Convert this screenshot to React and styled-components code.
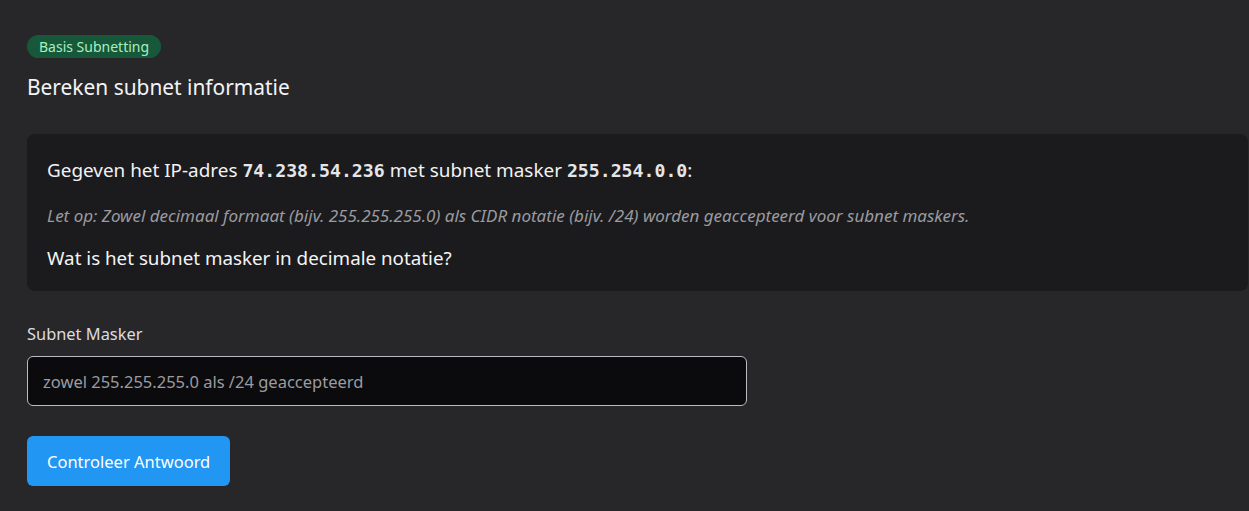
import React from "react";
import styled, { createGlobalStyle } from "styled-components";

const Global = createGlobalStyle`
  html, body {
    margin: 0;
    padding: 0;
    background: #27272a;
    color: #f1f1f3;
    font-family: "Noto Sans", "Open Sans", sans-serif;
    overflow: hidden;
  }
`;

const Page = styled.div`
  padding: 35px 1px 0 27px;
  display: flex;
  flex-direction: column;
  align-items: flex-start;
`;

const Badge = styled.span`
  display: inline-flex;
  align-items: center;
  height: 23px;
  padding: 0 12px;
  border-radius: 12px;
  background: #18583a;
  color: #a6f0c0;
  font-size: 14px;
`;

const Title = styled.h2`
  margin: 16px 0 0;
  font-size: 20.9px;
  line-height: 26px;
  font-weight: 400;
  color: #f4f4f6;
`;

const Card = styled.div`
  align-self: stretch;
  margin-top: 34px;
  height: 157px;
  box-sizing: border-box;
  padding: 24px 20px 0;
  background: #1b1b1d;
  border-radius: 8px;
`;

const Given = styled.p`
  margin: 0;
  font-size: 18.9px;
  line-height: 24px;
  color: #f2f2f4;

  code {
    font-family: "DejaVu Sans Mono", "Liberation Mono", monospace;
    font-weight: 700;
    font-size: 18.2px;
    color: #e6e6e8;
  }
`;

const Note = styled.p`
  margin: 23px 0 0;
  font-size: 17px;
  line-height: 20px;
  font-style: italic;
  color: #9a9aa0;
`;

const Question = styled.p`
  margin: 20px 0 0;
  font-size: 18.8px;
  line-height: 24px;
  color: #f4f4f6;
`;

const Field = styled.div`
  margin-top: 33px;
  display: flex;
  flex-direction: column;
  gap: 12px;
`;

const Label = styled.label`
  font-size: 16.4px;
  line-height: 20px;
  color: #dcdce0;
`;

const Input = styled.input`
  width: 720px;
  height: 50px;
  box-sizing: border-box;
  padding: 0 15px;
  border: 1px solid #b9bcc4;
  border-radius: 6px;
  background: #0b0b0d;
  color: #f0f0f0;
  font-family: inherit;
  font-size: 16.5px;
  outline: none;

  &::placeholder {
    color: #9b9ba0;
  }
`;

const Button = styled.button`
  margin-top: 30px;
  height: 50px;
  padding: 0 20px;
  border: none;
  border-radius: 6px;
  background: #2196f3;
  color: #ffffff;
  font-family: inherit;
  font-size: 16.5px;
  cursor: pointer;
`;

export default function App() {
  return (
    <>
      <Global />
      <Page>
        <Badge>Basis Subnetting</Badge>
        <Title>Bereken subnet informatie</Title>
        <Card>
          <Given>
            Gegeven het IP-adres <code>74.238.54.236</code> met subnet masker{" "}
            <code>255.254.0.0</code>:
          </Given>
          <Note>
            Let op: Zowel decimaal formaat (bijv. 255.255.255.0) als CIDR notatie
            (bijv. /24) worden geaccepteerd voor subnet maskers.
          </Note>
          <Question>Wat is het subnet masker in decimale notatie?</Question>
        </Card>
        <Field>
          <Label htmlFor="mask">Subnet Masker</Label>
          <Input id="mask" placeholder="zowel 255.255.255.0 als /24 geaccepteerd" />
        </Field>
        <Button>Controleer Antwoord</Button>
      </Page>
    </>
  );
}
